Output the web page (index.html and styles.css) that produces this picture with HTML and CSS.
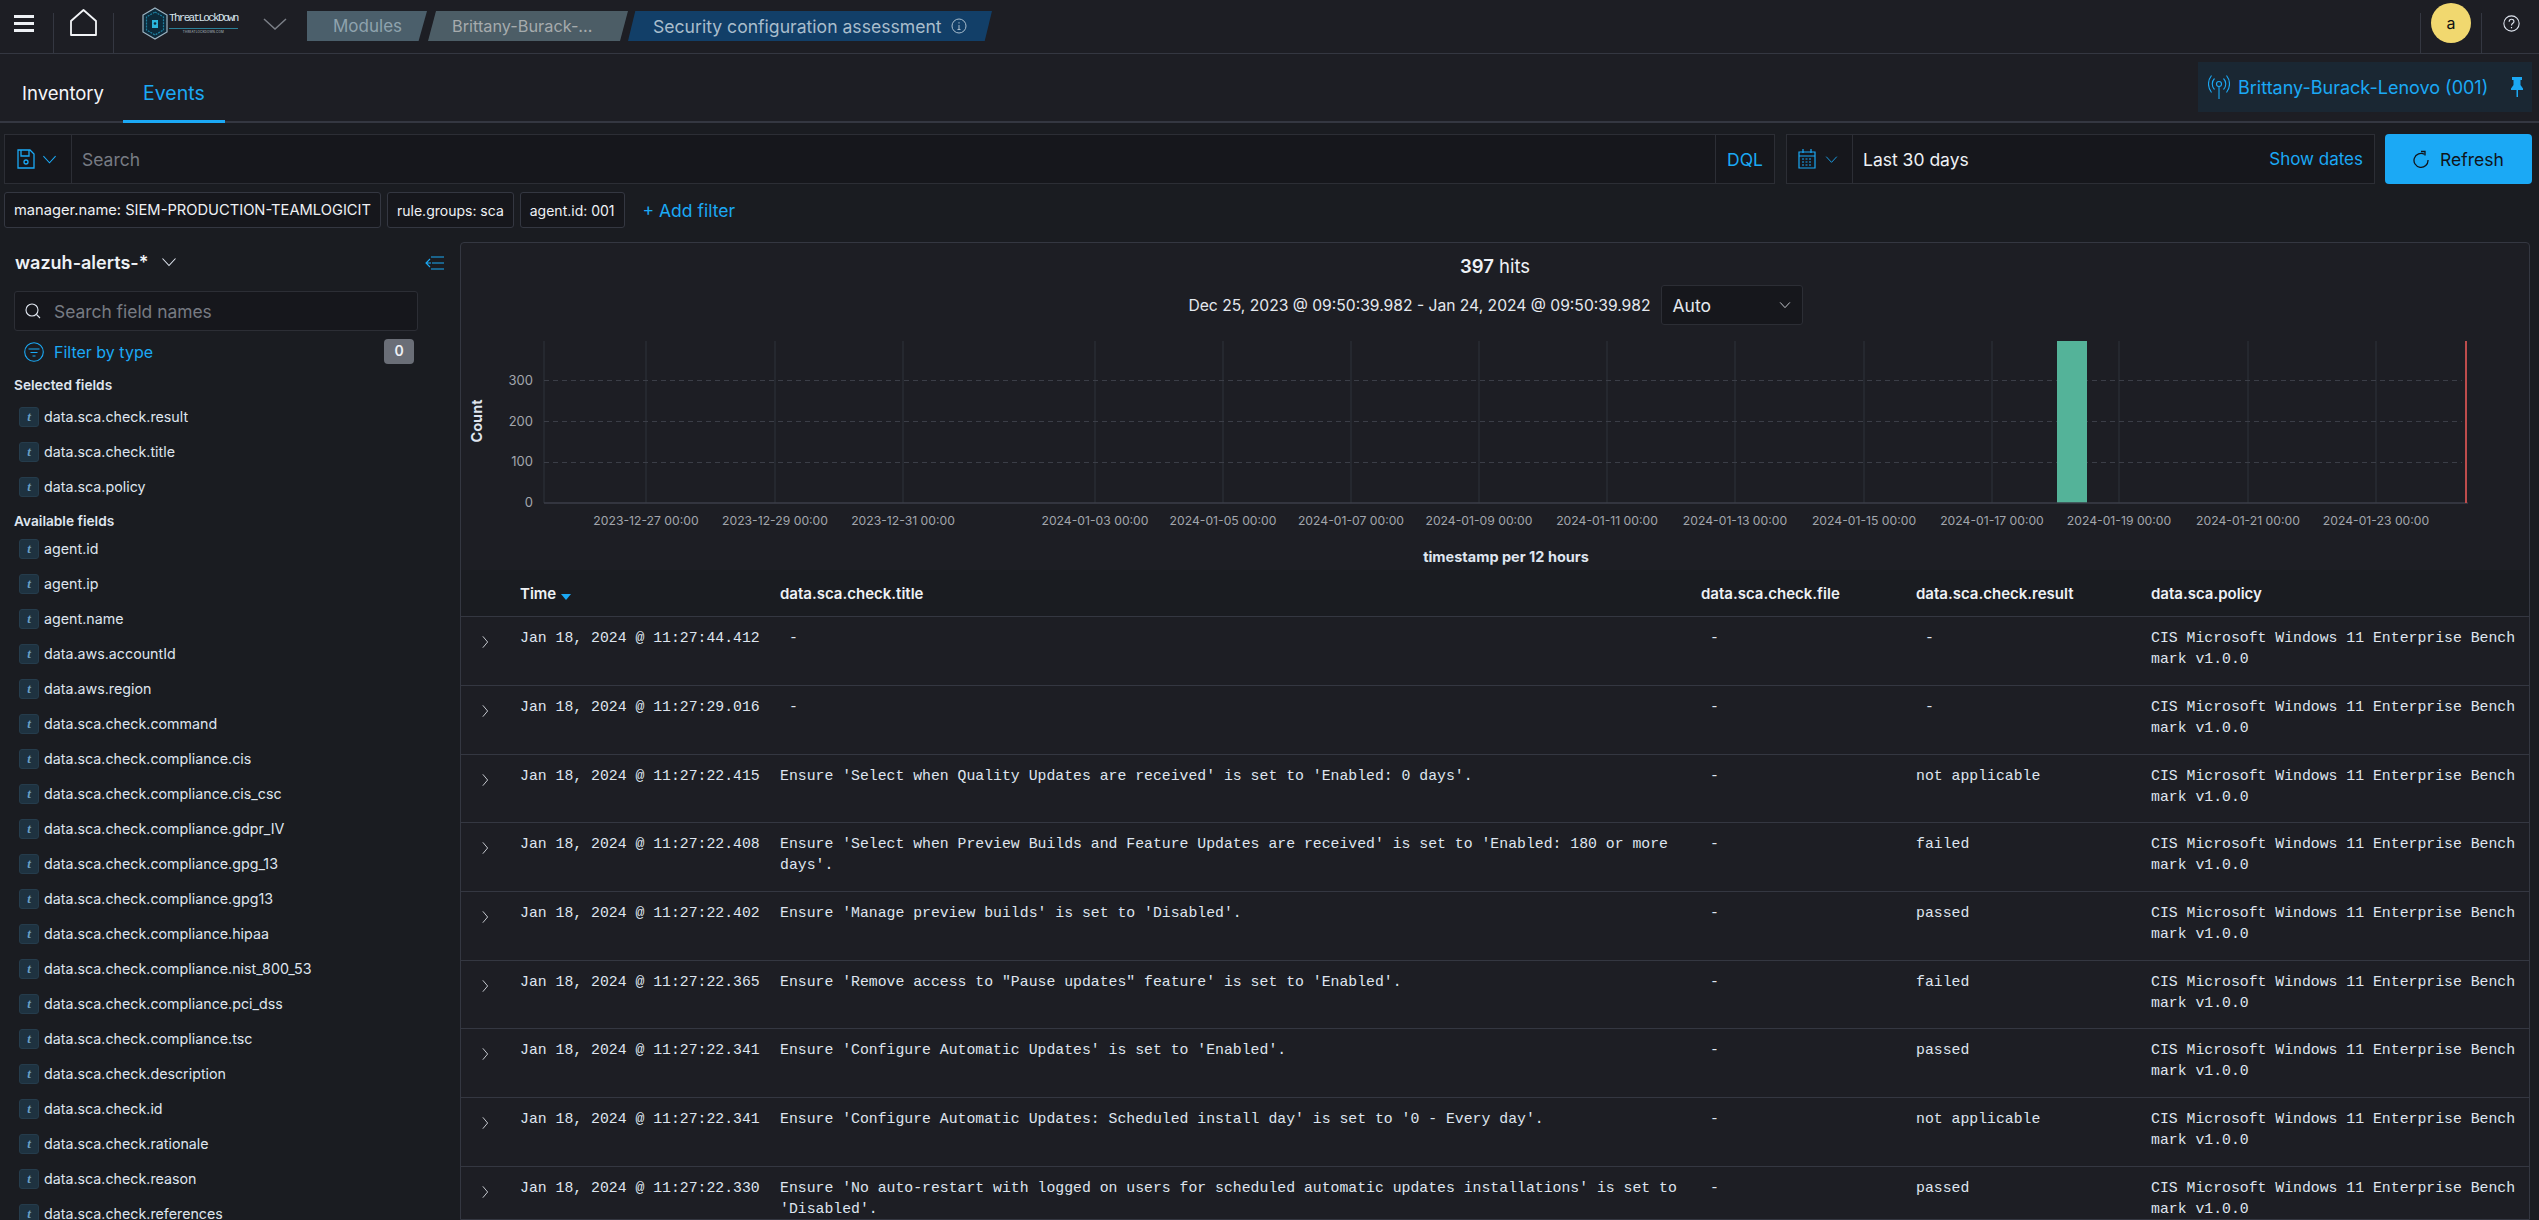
FILE: index.html
```html
<!DOCTYPE html>
<html lang="en">
<head>
  <meta charset="UTF-8">
  <title>Security configuration assessment</title>
  <link rel="stylesheet" href="styles.css">
</head>
<body>

<svg class="sprites" aria-hidden="true">
  <symbol id="chev" viewBox="0 0 16 16"><path d="M1.500 4.500 8 11.500l6.500-7" fill="none" stroke="currentColor" stroke-width="1.100"/></symbol>
  <symbol id="chev-right" viewBox="0 0 16 16"><path d="M5.500 1.500 11 8l-5.500 6.500" fill="none" stroke="currentColor" stroke-width="1.100"/></symbol>
</svg>

<header class="topbar">
  <button class="menu-btn"><span></span><span></span><span></span></button>
  <div class="home-cell">
    <svg width="27" height="27" viewBox="0 0 27 27"><path d="M13.500 1 26 12v14H1V12z" fill="none" stroke="#f2f4f7" stroke-width="1.800" stroke-linejoin="round"/></svg>
  </div>
  <div class="logo">
    <svg width="26" height="33" viewBox="0 0 26 33">
      <path d="M13 1 25 8v17l-12 7-12-7V8z" fill="#0d2a3a" stroke="#9fb6c4" stroke-width="1.200"/>
      <path d="M13 5 21.500 10v13L13 28l-8.500-5V10z" fill="none" stroke="#1e7f9f" stroke-width="1.200" stroke-dasharray="2 1"/>
      <path d="M10 13h6v8h-6z" fill="#2bb7dd"/>
      <circle cx="13" cy="16.500" r="1.300" fill="#0d2a3a"/>
    </svg>
    <div class="logo-text">
      <span class="logo-name">ThreatLockDown</span>
      <span class="logo-sub">THREATLOCKDOWN.COM</span>
    </div>
  </div>
  <svg class="logo-chev" width="24" height="12" viewBox="0 0 24 12"><path d="M1 1l11 10L23 1" fill="none" stroke="#7b7f87" stroke-width="1.500"/></svg>
  <nav class="crumbs">
    <span class="crumb crumb-first">Modules</span>
    <span class="crumb crumb-mid">Brittany-Burack-...</span>
    <span class="crumb crumb-last">Security configuration assessment
      <svg width="16" height="16" viewBox="0 0 16 16"><circle cx="8" cy="8" r="7" fill="none" stroke="currentColor"/><path d="M8 7v4.500M6.500 11.500h3M8 4.200v1.300" stroke="currentColor" fill="none"/></svg>
    </span>
  </nav>
  <div class="user-cell"><span class="avatar">a</span></div>
  <div class="help-cell">
    <svg width="17" height="17" viewBox="0 0 16 16"><circle cx="8" cy="8" r="7.200" fill="none" stroke="#dfe5ef"/><path d="M5.800 6.300c0-3 4.500-3 4.500-.2 0 1.700-2.300 1.700-2.300 3.700M8 11.200v1.300" fill="none" stroke="#dfe5ef" stroke-width="1.100"/></svg>
  </div>
</header>

<div class="tabs">
  <a class="tab">Inventory</a>
  <a class="tab tab-active">Events</a>
  <div class="agent-pill">
    <svg width="22" height="26" viewBox="0 0 22 26" fill="none" stroke="#1ba9f5" stroke-width="1.100">
      <circle cx="11" cy="10" r="2.500"/><path d="M11 12.500V25M6.500 4.500c-3 3-3 8 0 11M15.500 4.500c3 3 3 8 0 11M3.500 1.500c-4 5-4 12 0 17M18.500 1.500c4 5 4 12 0 17"/>
    </svg>
    <span class="agent-name">Brittany-Burack-Lenovo (001)</span>
    <svg class="pin" width="14" height="20" viewBox="0 0 14 20"><path d="M2 0h10v3H10.500v5L13 11.500V13H8v7H6.500v-7H1v-1.500L3.500 8V3H2z" fill="#1ba9f5"/></svg>
  </div>
</div>

<section class="querybar">
  <div class="search-box">
    <div class="save-btn">
      <svg width="18" height="20" viewBox="0 0 18 20" fill="none" stroke="#1ba9f5" stroke-width="1.300"><path d="M1 1h12l4 4v14H1zM4 1v6h8V1"/><circle cx="9" cy="13" r="2"/></svg>
      <svg class="blue-chev" width="15" height="15"><use href="#chev"/></svg>
    </div>
    <div class="search-input">Search</div>
    <div class="dql">DQL</div>
  </div>
  <div class="date-box">
    <div class="cal-btn">
      <svg width="18" height="20" viewBox="0 0 18 20" fill="none" stroke="#1ba9f5" stroke-width="1.200"><path d="M1 3h16v16H1zM1 7h16M5 0v4M13 0v4"/><path d="M4 10h10M4 13h10M4 16h10" stroke-dasharray="2 1.500"/></svg>
      <svg class="blue-chev" width="13" height="13"><use href="#chev"/></svg>
    </div>
    <div class="date-value">Last 30 days</div>
    <div class="show-dates">Show dates</div>
  </div>
  <button class="refresh">
    <svg width="16" height="19" viewBox="0 0 16 19" fill="none" stroke="#10141a" stroke-width="1.300"><path d="M11.500 4.300A7 7 0 1 0 15 10"/><path d="M8 1.500h4v4" /></svg>
    Refresh
  </button>
</section>

<section class="filterbar">
  <span class="chip chip-wide">manager.name: SIEM-PRODUCTION-TEAMLOGICIT</span>
  <span class="chip">rule.groups: sca</span>
  <span class="chip">agent.id: 001</span>
  <a class="add-filter">+ Add filter</a>
</section>

<main class="layout">
  <aside class="sidebar">
    <div class="index-row">
      <span class="index-name">wazuh-alerts-*</span>
      <svg class="index-chev" width="16" height="16"><use href="#chev"/></svg>
      <svg class="collapse" width="19" height="14" viewBox="0 0 19 14" fill="none" stroke="#1ba9f5" stroke-width="1.100"><path d="M6 1h13M7 7H19M6 13h13M1 7h5M5 3 1 7l4 4"/></svg>
    </div>
    <div class="field-search">
      <svg width="16" height="16" viewBox="0 0 16 16" fill="none" stroke="#dfe5ef" stroke-width="1.100"><circle cx="7" cy="7" r="6"/><path d="m11.500 11.500 3.500 3.500"/></svg>
      <span>Search field names</span>
    </div>
    <div class="filter-type">
      <svg width="20" height="20" viewBox="0 0 20 20" fill="none" stroke="#1ba9f5" stroke-width="1.100"><circle cx="10" cy="10" r="9.300"/><path d="M4.500 7h11M6.500 10.500h7M8.500 14h3"/></svg>
      <span class="filter-label">Filter by type</span>
      <span class="count-badge">0</span>
    </div>

    <h3 class="field-head">Selected fields</h3>
    <ul class="fields">
      <li><i>t</i>data.sca.check.result</li>
      <li><i>t</i>data.sca.check.title</li>
      <li><i>t</i>data.sca.policy</li>
    </ul>
    <h3 class="field-head field-head-2">Available fields</h3>
    <ul class="fields fields-available">
      <li><i>t</i>agent.id</li>
      <li><i>t</i>agent.ip</li>
      <li><i>t</i>agent.name</li>
      <li><i>t</i>data.aws.accountId</li>
      <li><i>t</i>data.aws.region</li>
      <li><i>t</i>data.sca.check.command</li>
      <li><i>t</i>data.sca.check.compliance.cis</li>
      <li><i>t</i>data.sca.check.compliance.cis_csc</li>
      <li><i>t</i>data.sca.check.compliance.gdpr_IV</li>
      <li><i>t</i>data.sca.check.compliance.gpg_13</li>
      <li><i>t</i>data.sca.check.compliance.gpg13</li>
      <li><i>t</i>data.sca.check.compliance.hipaa</li>
      <li><i>t</i>data.sca.check.compliance.nist_800_53</li>
      <li><i>t</i>data.sca.check.compliance.pci_dss</li>
      <li><i>t</i>data.sca.check.compliance.tsc</li>
      <li><i>t</i>data.sca.check.description</li>
      <li><i>t</i>data.sca.check.id</li>
      <li><i>t</i>data.sca.check.rationale</li>
      <li><i>t</i>data.sca.check.reason</li>
      <li><i>t</i>data.sca.check.references</li>
    </ul>
  </aside>

  <section class="results">
    <div class="hits"><b>397</b> hits</div>
    <div class="range-row">
      <span>Dec 25, 2023 @ 09:50:39.982 - Jan 24, 2024 @ 09:50:39.982</span>
      <div class="interval">Auto <svg width="12" height="12"><use href="#chev"/></svg></div>
    </div>

    <!-- viewBox uses page coordinates, easier to line up with the screenshot -->
    <svg class="chart" viewBox="461 330 2068 240" width="2068" height="240">
      <g class="grid-v">
        <path d="M544 341V503M646 341V503M775 341V503M903 341V503M1095 341V503M1223 341V503M1351 341V503M1479 341V503M1607 341V503M1735 341V503M1864 341V503M1992 341V503M2119 341V503M2248 341V503M2376 341V503"/>
      </g>
      <path class="grid-h" d="M544 380.500H2462M544 421.500H2462M544 462.500H2462"/>
      <rect x="2057" y="341" width="30" height="162" fill="#54b399"/>
      <path d="M544 503H2468" stroke="#3b3e48" stroke-width="1.500"/>
      <rect x="2465" y="341" width="2" height="162" fill="#bd4c4c"/>
      <g class="y-ticks">
        <text x="533" y="385">300</text>
        <text x="533" y="426">200</text>
        <text x="533" y="466">100</text>
        <text x="533" y="507">0</text>
      </g>
      <g class="x-ticks">
        <text x="646" y="525">2023-12-27 00:00</text>
        <text x="775" y="525">2023-12-29 00:00</text>
        <text x="903" y="525">2023-12-31 00:00</text>
        <text x="1095" y="525">2024-01-03 00:00</text>
        <text x="1223" y="525">2024-01-05 00:00</text>
        <text x="1351" y="525">2024-01-07 00:00</text>
        <text x="1479" y="525">2024-01-09 00:00</text>
        <text x="1607" y="525">2024-01-11 00:00</text>
        <text x="1735" y="525">2024-01-13 00:00</text>
        <text x="1864" y="525">2024-01-15 00:00</text>
        <text x="1992" y="525">2024-01-17 00:00</text>
        <text x="2119" y="525">2024-01-19 00:00</text>
        <text x="2248" y="525">2024-01-21 00:00</text>
        <text x="2376" y="525">2024-01-23 00:00</text>
      </g>
      <text class="axis-title" transform="rotate(-90 482 421)" x="482" y="421">Count</text>
      <text class="axis-title" x="1506" y="562">timestamp per 12 hours</text>
    </svg>

    <table class="docs">
      <colgroup>
        <col class="col-toggle"><col class="col-time"><col class="col-title"><col class="col-file"><col class="col-result"><col>
      </colgroup>
      <thead>
        <tr>
          <th></th>
          <th>Time <span class="sort"></span></th>
          <th>data.sca.check.title</th>
          <th>data.sca.check.file</th>
          <th>data.sca.check.result</th>
          <th>data.sca.policy</th>
        </tr>
      </thead>
      <tbody>
        <tr>
          <td class="toggle"><svg width="14" height="14"><use href="#chev-right"/></svg></td>
          <td>Jan 18, 2024 @ 11:27:44.412</td>
          <td> -</td>
          <td> -</td>
          <td> -</td>
          <td>CIS Microsoft Windows 11 Enterprise Benchmark v1.0.0</td>
        </tr>
        <tr>
          <td class="toggle"><svg width="14" height="14"><use href="#chev-right"/></svg></td>
          <td>Jan 18, 2024 @ 11:27:29.016</td>
          <td> -</td>
          <td> -</td>
          <td> -</td>
          <td>CIS Microsoft Windows 11 Enterprise Benchmark v1.0.0</td>
        </tr>
        <tr>
          <td class="toggle"><svg width="14" height="14"><use href="#chev-right"/></svg></td>
          <td>Jan 18, 2024 @ 11:27:22.415</td>
          <td>Ensure 'Select when Quality Updates are received' is set to 'Enabled: 0 days'.</td>
          <td> -</td>
          <td>not applicable</td>
          <td>CIS Microsoft Windows 11 Enterprise Benchmark v1.0.0</td>
        </tr>
        <tr>
          <td class="toggle"><svg width="14" height="14"><use href="#chev-right"/></svg></td>
          <td>Jan 18, 2024 @ 11:27:22.408</td>
          <td>Ensure 'Select when Preview Builds and Feature Updates are received' is set to 'Enabled: 180 or more days'.</td>
          <td> -</td>
          <td>failed</td>
          <td>CIS Microsoft Windows 11 Enterprise Benchmark v1.0.0</td>
        </tr>
        <tr>
          <td class="toggle"><svg width="14" height="14"><use href="#chev-right"/></svg></td>
          <td>Jan 18, 2024 @ 11:27:22.402</td>
          <td>Ensure 'Manage preview builds' is set to 'Disabled'.</td>
          <td> -</td>
          <td>passed</td>
          <td>CIS Microsoft Windows 11 Enterprise Benchmark v1.0.0</td>
        </tr>
        <tr>
          <td class="toggle"><svg width="14" height="14"><use href="#chev-right"/></svg></td>
          <td>Jan 18, 2024 @ 11:27:22.365</td>
          <td>Ensure 'Remove access to "Pause updates" feature' is set to 'Enabled'.</td>
          <td> -</td>
          <td>failed</td>
          <td>CIS Microsoft Windows 11 Enterprise Benchmark v1.0.0</td>
        </tr>
        <tr>
          <td class="toggle"><svg width="14" height="14"><use href="#chev-right"/></svg></td>
          <td>Jan 18, 2024 @ 11:27:22.341</td>
          <td>Ensure 'Configure Automatic Updates' is set to 'Enabled'.</td>
          <td> -</td>
          <td>passed</td>
          <td>CIS Microsoft Windows 11 Enterprise Benchmark v1.0.0</td>
        </tr>
        <tr>
          <td class="toggle"><svg width="14" height="14"><use href="#chev-right"/></svg></td>
          <td>Jan 18, 2024 @ 11:27:22.341</td>
          <td>Ensure 'Configure Automatic Updates: Scheduled install day' is set to '0 - Every day'.</td>
          <td> -</td>
          <td>not applicable</td>
          <td>CIS Microsoft Windows 11 Enterprise Benchmark v1.0.0</td>
        </tr>
        <tr>
          <td class="toggle"><svg width="14" height="14"><use href="#chev-right"/></svg></td>
          <td>Jan 18, 2024 @ 11:27:22.330</td>
          <td>Ensure 'No auto-restart with logged on users for scheduled automatic updates installations' is set to 'Disabled'.</td>
          <td> -</td>
          <td>passed</td>
          <td>CIS Microsoft Windows 11 Enterprise Benchmark v1.0.0</td>
        </tr>
      </tbody>
    </table>
  </section>
</main>

</body>
</html>
```

FILE: styles.css
```css
* {
  box-sizing: border-box;
}

html, body {
  height: 1220px;
  overflow: hidden;
}

body {
  margin: 0;
  background: #1a1c21;
  color: #dfe5ef;
  font-family: Inter, "Liberation Sans", sans-serif;
  font-size: 14px;
}

.sprites {
  display: none;
}

/* top bar */
.topbar {
  height: 54px;
  background: #1d1e24;
  border-bottom: 1px solid #343741;
  display: flex;
  align-items: stretch;
}

.menu-btn {
  width: 53px;
  padding: 0 0 6px 14px;
  background: none;
  border: 0;
  display: flex;
  flex-direction: column;
  justify-content: center;
  gap: 4px;
  align-items: flex-start;
}

.menu-btn span {
  display: block;
  width: 20px;
  height: 3px;
  background: #eef1f5;
}

.home-cell {
  margin-top: 13px;
  width: 61px;
  border-left: 1px solid #343741;
  border-right: 1px solid #343741;
  display: flex;
  justify-content: center;
}

.home-cell svg {
  margin-top: -4px;
}

.logo {
  width: 142px;
  padding: 7px 0 0 28px;
  display: flex;
}

.logo-text {
  display: flex;
  flex-direction: column;
  margin-left: 1px;
}

.logo-name {
  font-family: "Liberation Mono", monospace;
  font-size: 11px;
  line-height: 19px;
  letter-spacing: -1.700px;
  color: #d7e4ec;
  padding-top: 2px;
  border-bottom: 1px solid #2c7f96;
}

.logo-sub {
  font-size: 3px;
  line-height: 6px;
  color: #b9c5cc;
  text-align: center;
  letter-spacing: .2px;
}

.logo-chev {
  margin: 18px 0 0 7px;
}

.crumbs {
  display: flex;
  margin: 11px 0 0 20px;
  height: 30px;
  font-size: 17px;
}

.crumb {
  display: flex;
  align-items: center;
  gap: 9px;
  height: 30px;
}

.crumb-first {
  width: 120px;
  padding-left: 26px;
  background: #4b5f6b;
  color: #8fa3ae;
  clip-path: polygon(0 0, 100% 0, 93% 100%, 0 100%);
}

.crumb-mid {
  width: 200px;
  margin-left: 1px;
  padding-left: 24px;
  background: #4c5d66;
  color: #a6abad;
  font-size: 16.300px;
  clip-path: polygon(4% 0, 100% 0, 96% 100%, 0 100%);
}

.crumb-last {
  width: 364px;
  padding-left: 25px;
  background: #123f68;
  color: #a9bdcc;
  font-size: 17.600px;
  clip-path: polygon(2% 0, 100% 0, 98% 100%, 0 100%);
}

.user-cell {
  margin: 13px 0 0 auto;
  width: 62px;
  border-left: 1px solid #343741;
  border-right: 1px solid #343741;
  display: flex;
  justify-content: center;
}

.avatar {
  width: 40px;
  height: 40px;
  margin-top: -10px;
  border-radius: 50%;
  background: #f1d86f;
  color: #111;
  font-size: 16px;
  display: flex;
  align-items: center;
  justify-content: center;
}

.help-cell {
  width: 57px;
  padding: 15px 0 0 21px;
}

/* tabs */
.tabs {
  height: 69px;
  background: #1d1e24;
  border-bottom: 2px solid #343741;
  display: flex;
  align-items: stretch;
  font-size: 18.500px;
}

.tab {
  padding: 9px 20px 0;
  display: flex;
  align-items: center;
  height: 69px;
}

.tab:first-child {
  padding: 9px 19px 0 22px;
  color: #f4f6f9;
}

.tab-active {
  color: #1ba9f5;
  border-bottom: 3px solid #1ba9f5;
  padding-top: 12px;
  font-size: 19.500px;
}

.agent-pill {
  margin: 8px 7px 0 auto;
  width: 334px;
  height: 50px;
  background: #1a2733;
  color: #1ba9f5;
  font-size: 18px;
  display: flex;
  align-items: center;
  padding-left: 10px;
}

.agent-name {
  margin-left: 8px;
}

.pin {
  margin-left: auto;
  margin-right: 8px;
}

/* query bar */
.querybar {
  display: flex;
  gap: 11px;
  padding: 11px 7px 0 4px;
}

.search-box, .date-box {
  height: 50px;
  background: #16171c;
  border: 1px solid #2c2e35;
  display: flex;
  align-items: stretch;
  font-size: 17.500px;
}

.search-box {
  width: 1771px;
}

.save-btn {
  width: 67px;
  border-right: 1px solid #2c2e35;
  display: flex;
  align-items: center;
  padding-left: 12px;
  gap: 7px;
}

.blue-chev {
  color: #1ba9f5;
}

.search-input {
  flex: 1;
  padding-left: 10px;
  color: #777b83;
  display: flex;
  align-items: center;
}

.dql {
  width: 59px;
  border-left: 1px solid #2c2e35;
  color: #1ba9f5;
  display: flex;
  align-items: center;
  justify-content: center;
}

.date-box {
  width: 589px;
}

.cal-btn {
  width: 66px;
  border-right: 1px solid #2c2e35;
  display: flex;
  align-items: center;
  padding-left: 11px;
  gap: 9px;
}

.date-value {
  flex: 1;
  padding-left: 10px;
  display: flex;
  align-items: center;
  color: #eef1f5;
}

.show-dates {
  color: #1ba9f5;
  padding-right: 11px;
  display: flex;
  align-items: center;
  font-size: 17px;
}

.refresh {
  width: 147px;
  height: 50px;
  margin-left: -1px;
  border: 0;
  border-radius: 4px;
  background: #1ba9f5;
  color: #10141a;
  font: 17.500px Inter, sans-serif;
  display: flex;
  align-items: center;
  justify-content: center;
  gap: 11px;
}

/* filter chips */
.filterbar {
  display: flex;
  align-items: center;
  gap: 6px;
  padding: 8px 0 0 4px;
  height: 44px;
}

.chip {
  height: 36px;
  padding: 0 9px;
  background: #16171c;
  border: 1px solid #343741;
  border-radius: 3px;
  color: #eef1f5;
  font-size: 14px;
  display: flex;
  align-items: center;
  white-space: nowrap;
}

.chip-wide {
  font-size: 14.700px;
}

.add-filter {
  margin-left: 12px;
  color: #1ba9f5;
  font-size: 17.500px;
}

/* main area */
.layout {
  display: flex;
  align-items: flex-start;
  padding-top: 14px;
}

.sidebar {
  width: 460px;
  flex: none;
  padding-left: 14px;
}

.index-row {
  height: 40px;
  display: flex;
  align-items: center;
  position: relative;
}

.index-name {
  margin-left: 1px;
  font-size: 18px;
  font-weight: 600;
  color: #eef1f5;
}

.index-chev {
  margin-left: 13px;
}

.collapse {
  position: absolute;
  left: 411px;
  top: 14px;
}

.field-search {
  margin-top: 9px;
  width: 404px;
  height: 40px;
  background: #16171c;
  border: 1px solid #2c2e35;
  border-radius: 3px;
  display: flex;
  align-items: center;
  padding-left: 10px;
  gap: 13px;
  font-size: 17.400px;
  color: #777b83;
}

.filter-type {
  width: 400px;
  height: 25px;
  margin-top: 8px;
  display: flex;
  align-items: center;
  padding-left: 10px;
}

.filter-label {
  margin-left: 10px;
  color: #1ba9f5;
  font-size: 16px;
}

.count-badge {
  margin-left: auto;
  width: 30px;
  height: 25px;
  background: #6a6e77;
  border-radius: 4px;
  color: #eef1f5;
  font-weight: 600;
  text-align: center;
  line-height: 23px;
}

.field-head {
  margin: 12px 0 0;
  font-size: 13.700px;
  font-weight: 600;
  line-height: 18px;
  color: #dfe5ef;
}

.field-head-2 {
  margin-top: 8px;
}

.fields {
  list-style: none;
  margin: 5px 0 0;
  padding: 0;
}

.fields-available {
  margin-top: 1px;
}

.fields li {
  height: 35px;
  display: flex;
  align-items: center;
  color: #dfe5ef;
  font-size: 14.250px;
}

.fields i {
  width: 20px;
  height: 20px;
  margin: 0 5px;
  background: #1e3240;
  border: 1px solid #253c4c;
  border-radius: 3px;
  color: #6a9fc4;
  font: italic bold 13px "Liberation Serif", serif;
  text-align: center;
  line-height: 18px;
}

/* results panel */
.results {
  width: 2070px;
  height: 978px;
  background: #1d1e24;
  border: 1px solid #343741;
  border-radius: 4px 4px 0 0;
  overflow: hidden;
}

.hits {
  height: 42px;
  padding-top: 12px;
  text-align: center;
  font-size: 18.500px;
  line-height: 22px;
  color: #eef1f5;
}

.hits b {
  font-weight: 600;
}

.range-row {
  display: flex;
  justify-content: center;
  align-items: center;
  gap: 10px;
  height: 40px;
  padding-left: 1px;
  font-size: 15.650px;
  color: #e4e8ee;
}

.interval {
  width: 142px;
  height: 40px;
  background: #16171c;
  border: 1px solid #2c2e35;
  border-radius: 3px;
  display: flex;
  align-items: center;
  justify-content: space-between;
  padding: 0 11px;
  font-size: 17.500px;
}

.chart {
  display: block;
  margin-top: 5px;
}

.grid-v path {
  stroke: #2f323a;
  stroke-width: 1;
  fill: none;
}

.grid-h {
  stroke: #3b3e47;
  stroke-width: 1;
  stroke-dasharray: 5 4;
  fill: none;
}

.y-ticks text {
  fill: #a2a6ad;
  font-size: 13px;
  text-anchor: end;
}

.x-ticks text {
  fill: #a2a6ad;
  font-size: 12.200px;
  text-anchor: middle;
}

.axis-title {
  fill: #dfe5ef;
  font-size: 14.500px;
  font-weight: 700;
  text-anchor: middle;
}

/* document table */
.docs {
  width: 100%;
  table-layout: fixed;
  border-collapse: collapse;
}

.col-toggle { width: 51px; }
.col-time { width: 260px; }
.col-title { width: 921px; }
.col-file { width: 215px; }
.col-result { width: 235px; }

.docs th {
  height: 46px;
  padding: 2px 8px 0;
  text-align: left;
  font-size: 15px;
  font-weight: 600;
  color: #eef1f5;
  background: #1a1c21;
  border-bottom: 1px solid #343741;
}

.sort {
  display: inline-block;
  margin-left: 1px;
  border: 5px solid transparent;
  border-top: 6px solid #1ba9f5;
  border-bottom: 0;
  vertical-align: -1px;
}

.docs td {
  height: 69px;
  padding: 11px 8px 12px;
  vertical-align: top;
  font-family: "Liberation Mono", monospace;
  font-size: 14.800px;
  line-height: 21px;
  color: #dfe5ef;
  white-space: pre-wrap;
  word-break: break-word;
  border-bottom: 1px solid #343741;
}

/* rows in the original are 68.6px, this keeps the drift out */
.docs tr:nth-child(3n) td {
  height: 68px;
}

.docs td:last-child {
  word-break: break-all;
}

.docs .toggle {
  padding: 18px 0 0 17px;
  color: #c9ccd2;
}
```
